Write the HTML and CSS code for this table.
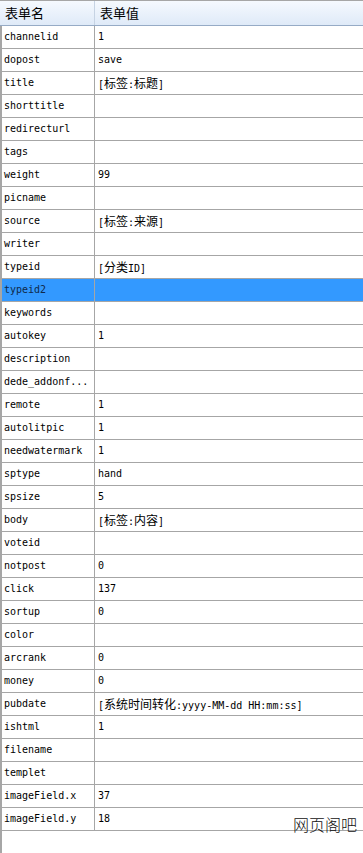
FILE: index.html
```html
<!DOCTYPE html>
<html>
<head>
<meta charset="utf-8">
<link rel="stylesheet" href="styles.css">
</head>
<body>
<div class="list">
  <div class="head">
    <div class="hname">表单名</div>
    <div class="hval">表单值</div>
  </div>
  <div class="body">
    <div class="row"><div class="name">channelid</div><div class="val">1</div></div>
    <div class="row"><div class="name">dopost</div><div class="val">save</div></div>
    <div class="row"><div class="name">title</div><div class="val">[<span class="c">标签</span>:<span class="c">标题</span>]</div></div>
    <div class="row"><div class="name">shorttitle</div><div class="val"></div></div>
    <div class="row"><div class="name">redirecturl</div><div class="val"></div></div>
    <div class="row"><div class="name">tags</div><div class="val"></div></div>
    <div class="row"><div class="name">weight</div><div class="val">99</div></div>
    <div class="row"><div class="name">picname</div><div class="val"></div></div>
    <div class="row"><div class="name">source</div><div class="val">[<span class="c">标签</span>:<span class="c">来源</span>]</div></div>
    <div class="row"><div class="name">writer</div><div class="val"></div></div>
    <div class="row"><div class="name">typeid</div><div class="val">[<span class="c">分类</span>ID]</div></div>
    <div class="row selected"><div class="name">typeid2</div><div class="val"></div></div>
    <div class="row"><div class="name">keywords</div><div class="val"></div></div>
    <div class="row"><div class="name">autokey</div><div class="val">1</div></div>
    <div class="row"><div class="name">description</div><div class="val"></div></div>
    <div class="row"><div class="name">dede_addonf...</div><div class="val"></div></div>
    <div class="row"><div class="name">remote</div><div class="val">1</div></div>
    <div class="row"><div class="name">autolitpic</div><div class="val">1</div></div>
    <div class="row"><div class="name">needwatermark</div><div class="val">1</div></div>
    <div class="row"><div class="name">sptype</div><div class="val">hand</div></div>
    <div class="row"><div class="name">spsize</div><div class="val">5</div></div>
    <div class="row"><div class="name">body</div><div class="val">[<span class="c">标签</span>:<span class="c">内容</span>]</div></div>
    <div class="row"><div class="name">voteid</div><div class="val"></div></div>
    <div class="row"><div class="name">notpost</div><div class="val">0</div></div>
    <div class="row"><div class="name">click</div><div class="val">137</div></div>
    <div class="row"><div class="name">sortup</div><div class="val">0</div></div>
    <div class="row"><div class="name">color</div><div class="val"></div></div>
    <div class="row"><div class="name">arcrank</div><div class="val">0</div></div>
    <div class="row"><div class="name">money</div><div class="val">0</div></div>
    <div class="row"><div class="name">pubdate</div><div class="val">[<span class="c">系统时间转化</span>:yyyy-MM-dd HH:mm:ss]</div></div>
    <div class="row"><div class="name">ishtml</div><div class="val">1</div></div>
    <div class="row"><div class="name">filename</div><div class="val"></div></div>
    <div class="row"><div class="name">templet</div><div class="val"></div></div>
    <div class="row"><div class="name">imageField.x</div><div class="val">37</div></div>
    <div class="row"><div class="name">imageField.y</div><div class="val">18</div></div>
  </div>
</div>
<div class="watermark">网页阁吧</div>
</body>
</html>
```
FILE: styles.css
```css
html, body {
  margin: 0;
  padding: 0;
  background: #ffffff;
}
body {
  width: 363px;
  height: 853px;
  overflow: hidden;
  position: relative;
}
.list {
  display: flex;
  flex-direction: column;
  height: 853px;
}
.head {
  display: flex;
  height: 26px;
  box-sizing: border-box;
  border-top: 1px solid #a6a6a6;
  border-bottom: 1px solid #96abc6;
  background: linear-gradient(#f5f9fe, #dfeaf8);
  font-family: "Noto Sans CJK SC", sans-serif;
  font-size: 13px;
  color: #000;
  line-height: 24px;
}
.hname {
  width: 95px;
  box-sizing: border-box;
  padding-left: 5px;
  border-right: 1px solid #c6d3e3;
}
.hval {
  flex: 1;
  padding-left: 5px;
}
.body {
  flex: 1;
  border-left: 2px solid #a6a6a6;
}
.row {
  display: flex;
  height: 23px;
  box-sizing: border-box;
  border-bottom: 1px solid #a6a6a6;
  font-family: "DejaVu Sans Mono", monospace;
  font-size: 10px;
  line-height: 22px;
  color: #000;
}
.name {
  width: 93px;
  box-sizing: border-box;
  padding-left: 2px;
  border-right: 1px solid #a6a6a6;
  white-space: nowrap;
  overflow: hidden;
}
.val {
  flex: 1;
  padding-left: 3px;
  white-space: nowrap;
}
.c {
  font-family: "Noto Sans CJK SC", sans-serif;
  font-size: 12px;
}
.selected {
  background: #3399ff;
  color: #102a4a;
}
.watermark {
  position: absolute;
  left: 293px;
  top: 813px;
  font-family: "Noto Sans CJK SC", sans-serif;
  font-weight: 300;
  font-size: 16px;
  line-height: 22px;
  color: #111;
}
```
